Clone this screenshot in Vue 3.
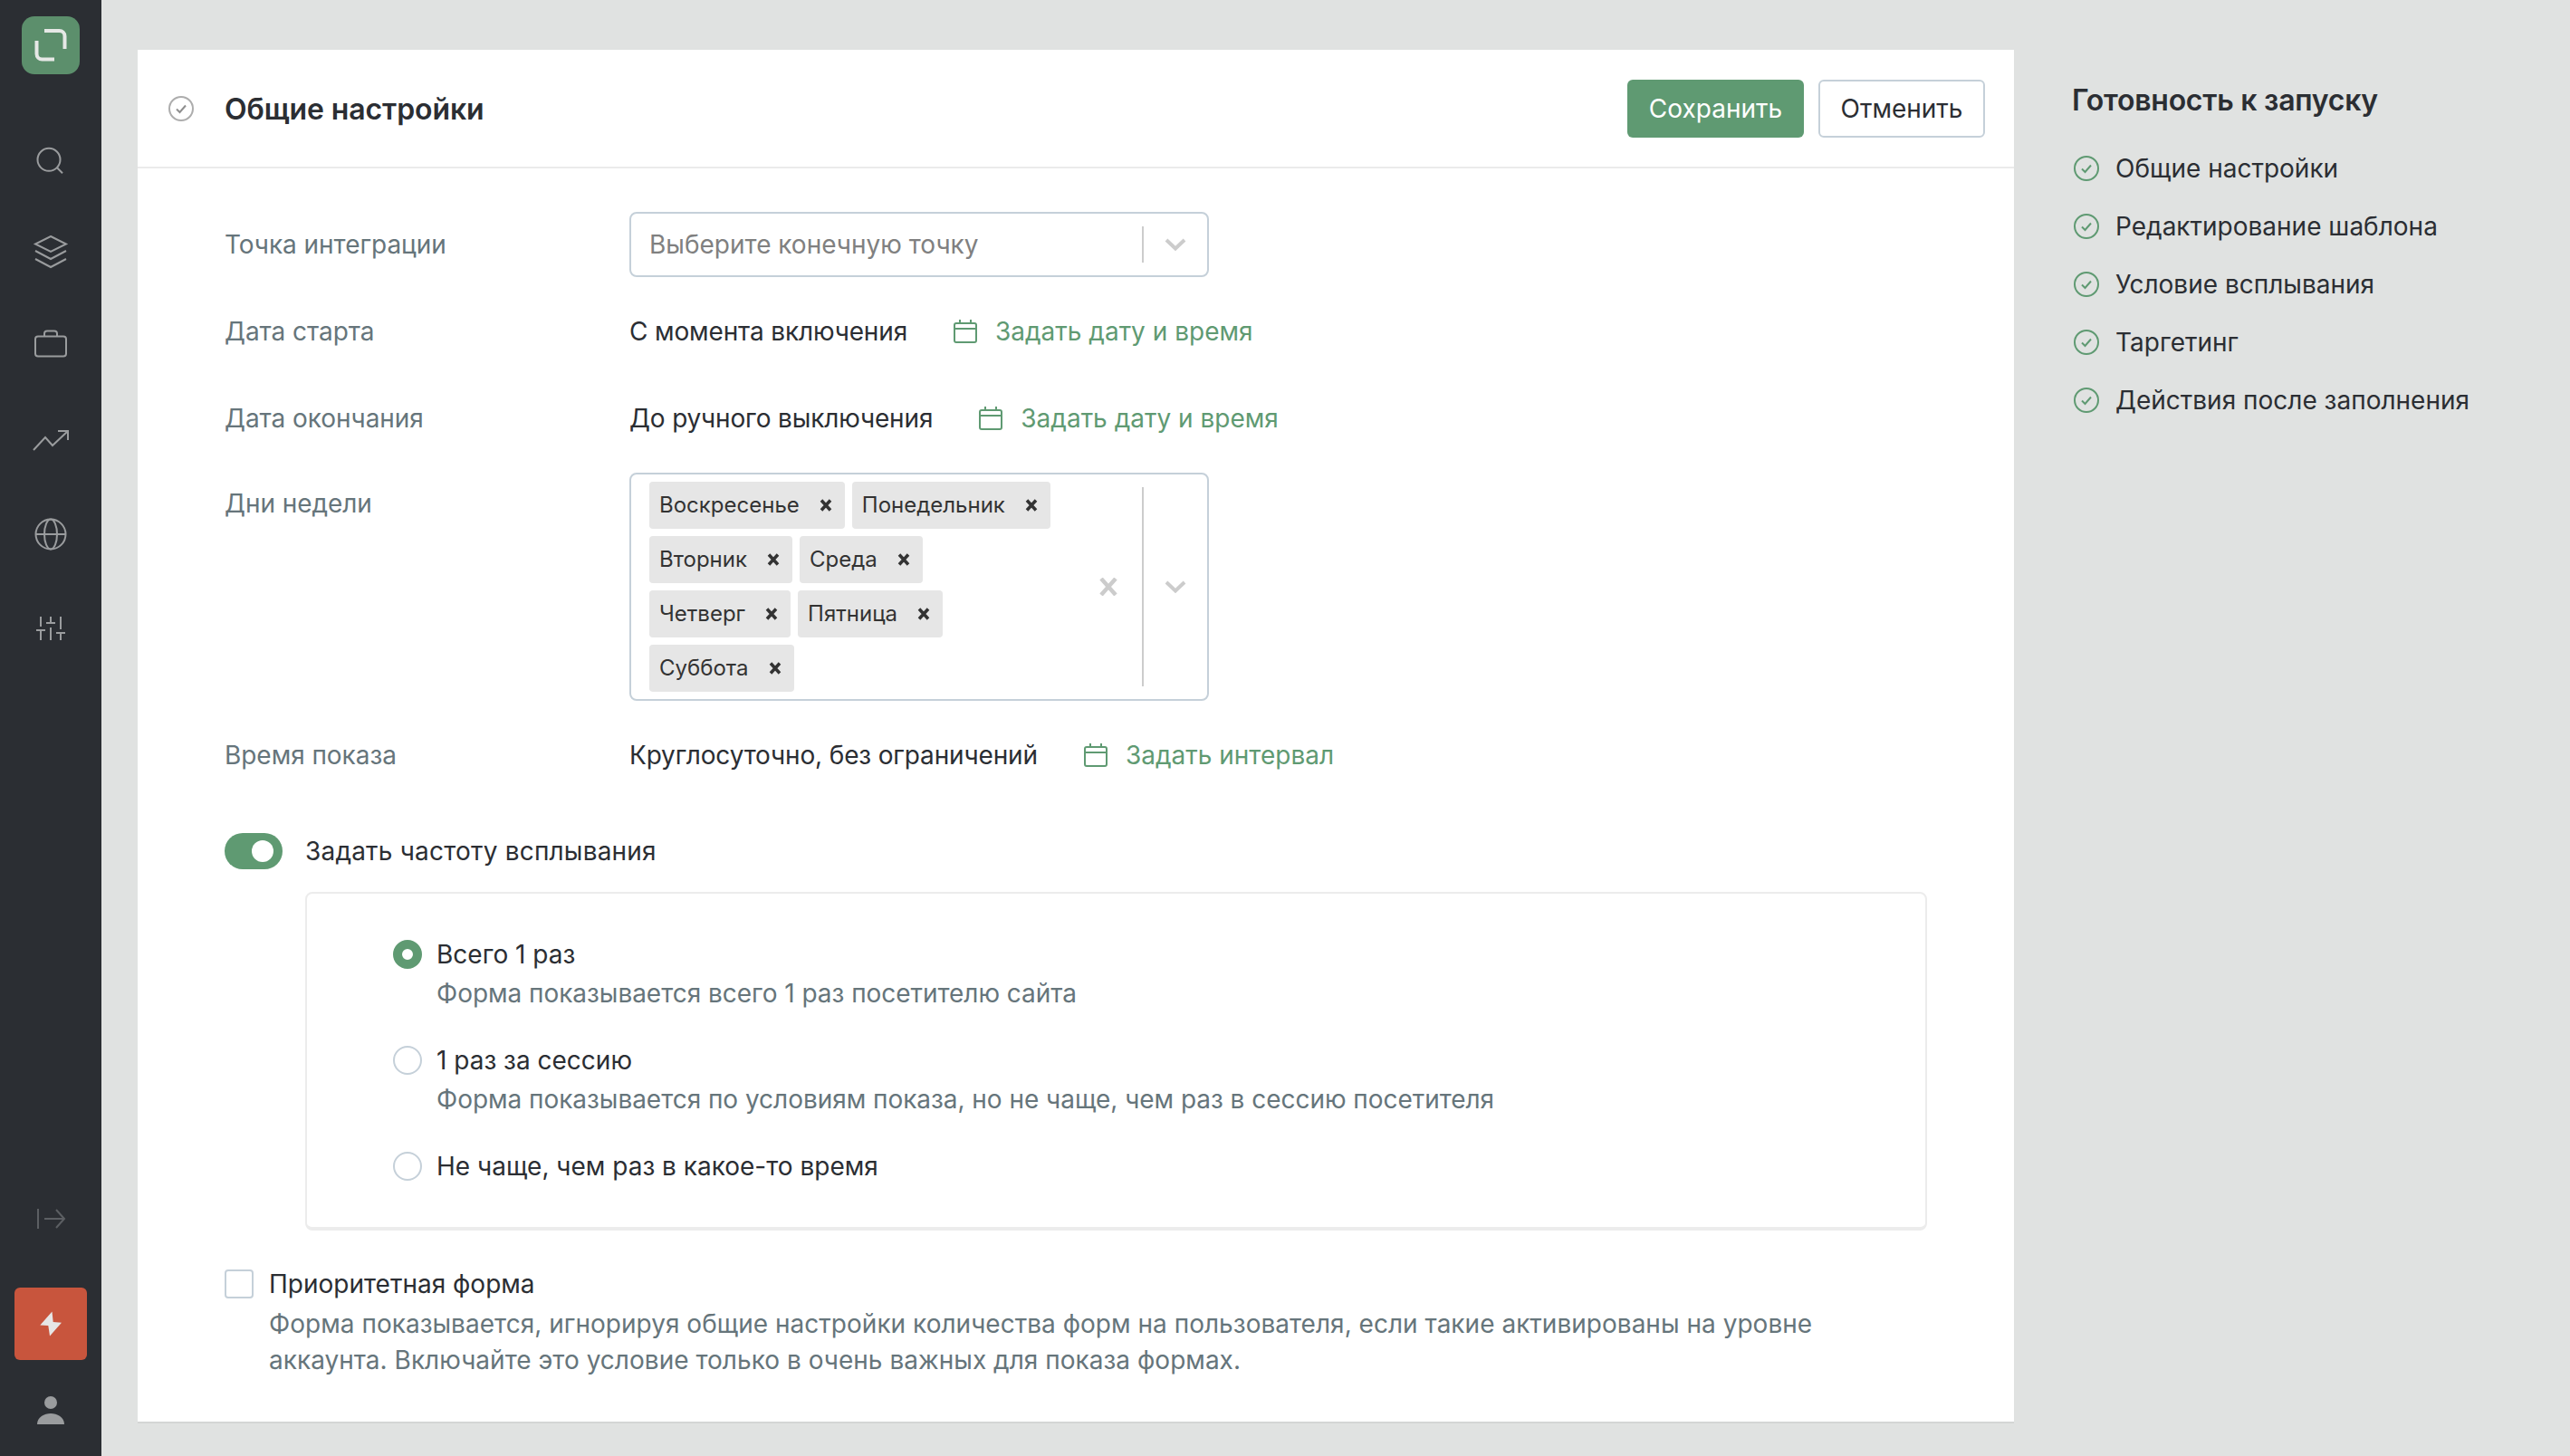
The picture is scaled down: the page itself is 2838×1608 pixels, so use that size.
<script setup>
const days = [
  ['Воскресенье', 'Понедельник'],
  ['Вторник', 'Среда'],
  ['Четверг', 'Пятница'],
  ['Суббота'],
]

const readiness = [
  'Общие настройки',
  'Редактирование шаблона',
  'Условие всплывания',
  'Таргетинг',
  'Действия после заполнения',
]

const plainRows = [
  { label: 'Дата старта', value: 'С момента включения', action: 'Задать дату и время' },
  { label: 'Дата окончания', value: 'До ручного выключения', action: 'Задать дату и время' },
]

const options = [
  { title: 'Всего 1 раз', text: 'Форма показывается всего 1 раз посетителю сайта', on: true },
  { title: '1 раз за сессию', text: 'Форма показывается по условиям показа, но не чаще, чем раз в сессию посетителя', on: false },
  { title: 'Не чаще, чем раз в какое-то время', text: '', on: false },
]
</script>

<template>
  <div class="page">
    <aside class="sidebar">
      <div class="logo">
        <svg width="64" height="64" viewBox="0 0 64 64" fill="none" stroke="#e6e8e6" stroke-width="4">
          <path d="M25 16H41.5a6 6 0 0 1 6 6V36" />
          <path d="M16.5 27V41.5a6 6 0 0 0 6 6H36" />
        </svg>
      </div>
      <nav class="nav">
        <a class="nav-item">
          <svg width="40" height="40" viewBox="0 0 40 40" fill="none" stroke="#9a9c9e" stroke-width="2">
            <circle cx="18" cy="19.300" r="12.500" />
            <path d="M27 28.300l6 6" />
          </svg>
        </a>
        <a class="nav-item">
          <svg width="40" height="40" viewBox="0 2 40 40" fill="none" stroke="#9a9c9e" stroke-width="2">
            <path d="M20 3L37 11.500L20 20L3 11.500Z" />
            <path d="M3 19L20 28L37 19" />
            <path d="M3 28L20 37L37 28" />
          </svg>
        </a>
        <a class="nav-item">
          <svg width="40" height="40" viewBox="0 3.500 40 40" fill="none" stroke="#9a9c9e" stroke-width="2">
            <rect x="3" y="12" width="34" height="22" rx="3" />
            <path d="M13 12V9a3 3 0 0 1 3-3h8a3 3 0 0 1 3 3v3" />
          </svg>
        </a>
        <a class="nav-item">
          <svg width="40" height="40" viewBox="0 1 40 40" fill="none" stroke="#9a9c9e" stroke-width="2">
            <path d="M1 31L14 17L22 26L39 10" />
            <path d="M28 10H39V20" />
          </svg>
        </a>
        <a class="nav-item">
          <svg width="40" height="40" viewBox="0 0 40 40" fill="none" stroke="#9a9c9e" stroke-width="2">
            <circle cx="20" cy="20" r="16.500" />
            <ellipse cx="20" cy="20" rx="7" ry="16.500" />
            <path d="M3.500 20H36.500" />
          </svg>
        </a>
        <a class="nav-item">
          <svg width="40" height="40" viewBox="0 0 40 40" fill="none" stroke="#9a9c9e" stroke-width="2">
            <path d="M9 7V18M4 22H14M9 22V33" />
            <path d="M20 7V14M15 14H25M20 19V33" />
            <path d="M31 7V21M26 25H36M31 25V33" />
          </svg>
        </a>
      </nav>
      <div class="side-bottom">
        <svg width="40" height="40" viewBox="0 0 40 40" fill="none" stroke="#5c5f63" stroke-width="2">
          <path d="M6 9V31M13 20H35M26 10L35 20L26 30" />
        </svg>
        <button class="bolt">
          <svg width="80" height="80" viewBox="0 0 80 80">
            <path d="M41.500 26.500L28.300 41.500L37.300 42L39 53.500L52 38.700L42.700 38Z" fill="#e6e6e6" />
          </svg>
        </button>
        <svg width="40" height="40" viewBox="0 0 40 40" fill="#9a9c9e">
          <circle cx="20" cy="11" r="7" />
          <path d="M5 35C5 27 13 23 20 23C27 23 35 27 35 35Z" />
        </svg>
      </div>
    </aside>

    <main class="card">
      <header class="card-head">
        <svg class="head-check" width="28" height="28" viewBox="0 0 28 28" fill="none" stroke="#adadad" stroke-width="2">
          <circle cx="14" cy="14" r="13" />
          <path d="M9 14.500l3.500 3.500L19 10.500" stroke="#8f8f8f" />
        </svg>
        <h1 class="title">Общие настройки</h1>
        <button class="btn btn-save">Сохранить</button>
        <button class="btn btn-cancel">Отменить</button>
      </header>

      <div class="card-body">
        <div class="form">
          <div class="row">
            <span class="label">Точка интеграции</span>
            <div class="select">
              <span class="placeholder">Выберите конечную точку</span>
              <span class="divider"></span>
              <span class="chevron-wrap">
                <svg width="24" height="14" viewBox="0 0 24 14" fill="none" stroke="#cccccc" stroke-width="4">
                  <path d="M2 2l10 9.500 10-9.500" />
                </svg>
              </span>
            </div>
          </div>

          <div class="row" v-for="row in plainRows" :key="row.label">
            <span class="label">{{ row.label }}</span>
            <span class="value">{{ row.value }}</span>
            <a class="link">
              <svg width="26" height="26" viewBox="0 0 26 26" fill="none" stroke="#5f9a72" stroke-width="2">
                <rect x="1" y="4" width="24" height="21" rx="2" />
                <path d="M1 10H25M7 0V4M19 0V4" />
              </svg>
              {{ row.action }}
            </a>
          </div>

          <div class="row row-top">
            <span class="label label-top">Дни недели</span>
            <div class="multi">
              <div class="tags">
                <div class="tag-line" v-for="(line, i) in days" :key="i">
                  <span class="tag" v-for="day in line" :key="day">
                    {{ day }}
                    <svg width="14" height="14" viewBox="0 0 14 14" fill="none" stroke="#333333" stroke-width="3.500">
                      <path d="M2 1.500L12 12.500M12 1.500L2 12.500" />
                    </svg>
                  </span>
                </div>
              </div>
              <svg class="clear" width="20" height="20" viewBox="0 0 20 20" fill="none" stroke="#cccccc" stroke-width="4.500">
                <path d="M2 1L18 19M18 1L2 19" />
              </svg>
              <span class="divider divider-tall"></span>
              <span class="chevron-wrap">
                <svg width="24" height="14" viewBox="0 0 24 14" fill="none" stroke="#cccccc" stroke-width="4">
                  <path d="M2 2l10 9.500 10-9.500" />
                </svg>
              </span>
            </div>
          </div>

          <div class="row">
            <span class="label">Время показа</span>
            <span class="value">Круглосуточно, без ограничений</span>
            <a class="link">
              <svg width="26" height="26" viewBox="0 0 26 26" fill="none" stroke="#5f9a72" stroke-width="2">
                <rect x="1" y="4" width="24" height="21" rx="2" />
                <path d="M1 10H25M7 0V4M19 0V4" />
              </svg>
              Задать интервал
            </a>
          </div>
        </div>

        <div class="toggle-row">
          <span class="toggle"><span class="knob"></span></span>
          <span class="toggle-label">Задать частоту всплывания</span>
        </div>

        <div class="freq-box">
          <div class="option" v-for="opt in options" :key="opt.title">
            <span class="radio" :class="{ 'radio-on': opt.on }"></span>
            <div>
              <div class="opt-title">{{ opt.title }}</div>
              <div class="hint" v-if="opt.text">{{ opt.text }}</div>
            </div>
          </div>
        </div>

        <div class="priority">
          <span class="checkbox"></span>
          <div>
            <div class="opt-title">Приоритетная форма</div>
            <div class="hint hint-wide">Форма показывается, игнорируя общие настройки количества форм на пользователя, если такие активированы на уровне аккаунта. Включайте это условие только в очень важных для показа формах.</div>
          </div>
        </div>
      </div>
    </main>

    <section class="ready">
      <h2 class="ready-title">Готовность к запуску</h2>
      <ul class="ready-list">
        <li class="ready-item" v-for="item in readiness" :key="item">
          <svg width="28" height="28" viewBox="0 0 28 28" fill="none" stroke="#5f9a72" stroke-width="2">
            <circle cx="14" cy="14" r="13" />
            <path d="M9 14.500l3.500 3.500L19 10.500" />
          </svg>
          {{ item }}
        </li>
      </ul>
    </section>
  </div>
</template>

<style>
html,
body {
  margin: 0;
  background: #e0e2e1;
}
</style>

<style scoped>
.page {
  display: flex;
  align-items: flex-start;
  width: 2838px;
  height: 1608px;
  overflow: hidden;
  background: #e0e2e1;
  font-family: "Inter", "Noto Sans", sans-serif;
  font-size: 28px;
  line-height: 40px;
  color: #2b2e33;
}

.sidebar {
  flex: none;
  display: flex;
  flex-direction: column;
  align-items: center;
  width: 112px;
  height: 1608px;
  background: #2b2e33;
}

.logo {
  width: 64px;
  height: 64px;
  margin-top: 18px;
  border-radius: 14px;
  background: #5c8f6c;
}

.nav {
  display: flex;
  flex-direction: column;
  margin-top: 43px;
}

.nav-item {
  display: flex;
  align-items: center;
  justify-content: center;
  height: 103.400px;
}

.side-bottom {
  display: flex;
  flex-direction: column;
  align-items: center;
  margin-top: auto;
  padding-bottom: 30px;
}

.bolt {
  display: block;
  width: 80px;
  height: 80px;
  margin: 56px 0 36px;
  padding: 0;
  border: 0;
  border-radius: 6px;
  background: #c8553d;
}

.bolt svg {
  display: block;
}

.card {
  flex: none;
  box-sizing: border-box;
  width: 2072px;
  height: 1517px;
  margin: 55px 0 0 40px;
  background: #ffffff;
  border-bottom: 2px solid #d4d6d5;
}

.card-head {
  display: flex;
  align-items: center;
  box-sizing: border-box;
  height: 131px;
  padding: 1px 32px 0 34px;
  border-bottom: 2px solid #ebebeb;
}

.head-check {
  flex: none;
  margin-right: 34px;
}

.title {
  flex: 1;
  margin: 1px 0 0;
  font-size: 32px;
  font-weight: 600;
  line-height: 40px;
  letter-spacing: -0.1px;
}

.btn {
  box-sizing: border-box;
  height: 64px;
  border-radius: 6px;
  font-family: inherit;
  font-size: 28px;
  line-height: 40px;
}

.btn-save {
  width: 195px;
  border: 0;
  background: #5f9a72;
  color: #ffffff;
}

.btn-cancel {
  width: 184px;
  margin-left: 16px;
  border: 2px solid #c5d0d9;
  background: #ffffff;
  color: #2b2e33;
}

.card-body {
  padding: 48px 0 0 96px;
}

.form {
  display: flex;
  flex-direction: column;
  gap: 24px;
}

.row {
  display: flex;
  align-items: center;
  min-height: 72px;
}

.row-top {
  align-items: flex-start;
}

.label {
  flex: none;
  width: 447px;
  color: #66757b;
  letter-spacing: -0.05px;
}

.label-top {
  padding-top: 14px;
}

.select {
  display: flex;
  align-items: center;
  box-sizing: border-box;
  width: 640px;
  height: 72px;
  padding-left: 20px;
  border: 2px solid #c5d0d9;
  border-radius: 8px;
}

.placeholder {
  flex: 1;
  color: #808080;
}

.divider {
  flex: none;
  width: 2px;
  height: 40px;
  background: #cccccc;
}

.divider-tall {
  height: 220px;
}

.chevron-wrap {
  display: flex;
  justify-content: center;
  flex: none;
  width: 70px;
}

.value {
  margin-right: 51px;
  letter-spacing: -0.15px;
}

.link {
  display: flex;
  align-items: center;
  gap: 20px;
  color: #5f9a72;
}

.multi {
  display: flex;
  align-items: center;
  box-sizing: border-box;
  width: 640px;
  height: 252px;
  padding-left: 20px;
  border: 2px solid #c5d0d9;
  border-radius: 8px;
}

.tags {
  flex: 1;
  display: flex;
  flex-direction: column;
  gap: 8px;
}

.tag-line {
  display: flex;
  gap: 8px;
}

.tag {
  display: flex;
  align-items: center;
  gap: 22px;
  box-sizing: border-box;
  height: 52px;
  padding: 0 14px 0 11px;
  border-radius: 4px;
  background: #e6e6e6;
  font-size: 24px;
  color: #333333;
}

.clear {
  flex: none;
  margin-right: 27px;
}

.toggle-row {
  display: flex;
  align-items: center;
  gap: 25px;
  margin-top: 50px;
}

.toggle-label {
  letter-spacing: 0.2px;
}

.toggle {
  display: flex;
  align-items: center;
  justify-content: flex-end;
  box-sizing: border-box;
  width: 64px;
  height: 40px;
  padding-right: 10px;
  border-radius: 20px;
  background: #5f9a72;
}

.knob {
  width: 24px;
  height: 24px;
  border-radius: 50%;
  background: #ffffff;
}

.freq-box {
  display: flex;
  flex-direction: column;
  gap: 34px;
  box-sizing: border-box;
  width: 1791px;
  height: 374px;
  margin: 25px 0 0 89px;
  padding: 47px 0 0 95px;
  border: 2px solid #ececec;
  border-bottom-width: 4px;
  border-radius: 8px;
}

.option {
  display: flex;
  gap: 16px;
}

.option .hint {
  letter-spacing: -0.04px;
}

.radio {
  flex: none;
  box-sizing: border-box;
  width: 32px;
  height: 32px;
  margin-top: 4px;
  border: 2px solid #c5d0d9;
  border-radius: 50%;
}

.radio-on {
  border: 10px solid #5f9a72;
}

.opt-title {
  color: #2b2e33;
}

.hint {
  margin-top: 3px;
  color: #66757b;
}

.priority {
  display: flex;
  gap: 17px;
  margin-top: 39px;
}

.checkbox {
  flex: none;
  box-sizing: border-box;
  width: 32px;
  height: 32px;
  margin-top: 4px;
  border: 2px solid #c5d0d9;
  border-radius: 4px;
}

.hint-wide {
  width: 1760px;
  margin-top: 4px;
  letter-spacing: 0.02px;
}

.ready {
  flex: none;
  margin: 91px 0 0 64px;
}

.ready-title {
  margin: 0;
  font-size: 32px;
  font-weight: 600;
  line-height: 40px;
  letter-spacing: -0.25px;
}

.ready-list {
  display: flex;
  flex-direction: column;
  gap: 24px;
  margin: 35px 0 0;
  padding: 0 0 0 2px;
  list-style: none;
}

.ready-item {
  display: flex;
  align-items: center;
  gap: 18px;
}
</style>
